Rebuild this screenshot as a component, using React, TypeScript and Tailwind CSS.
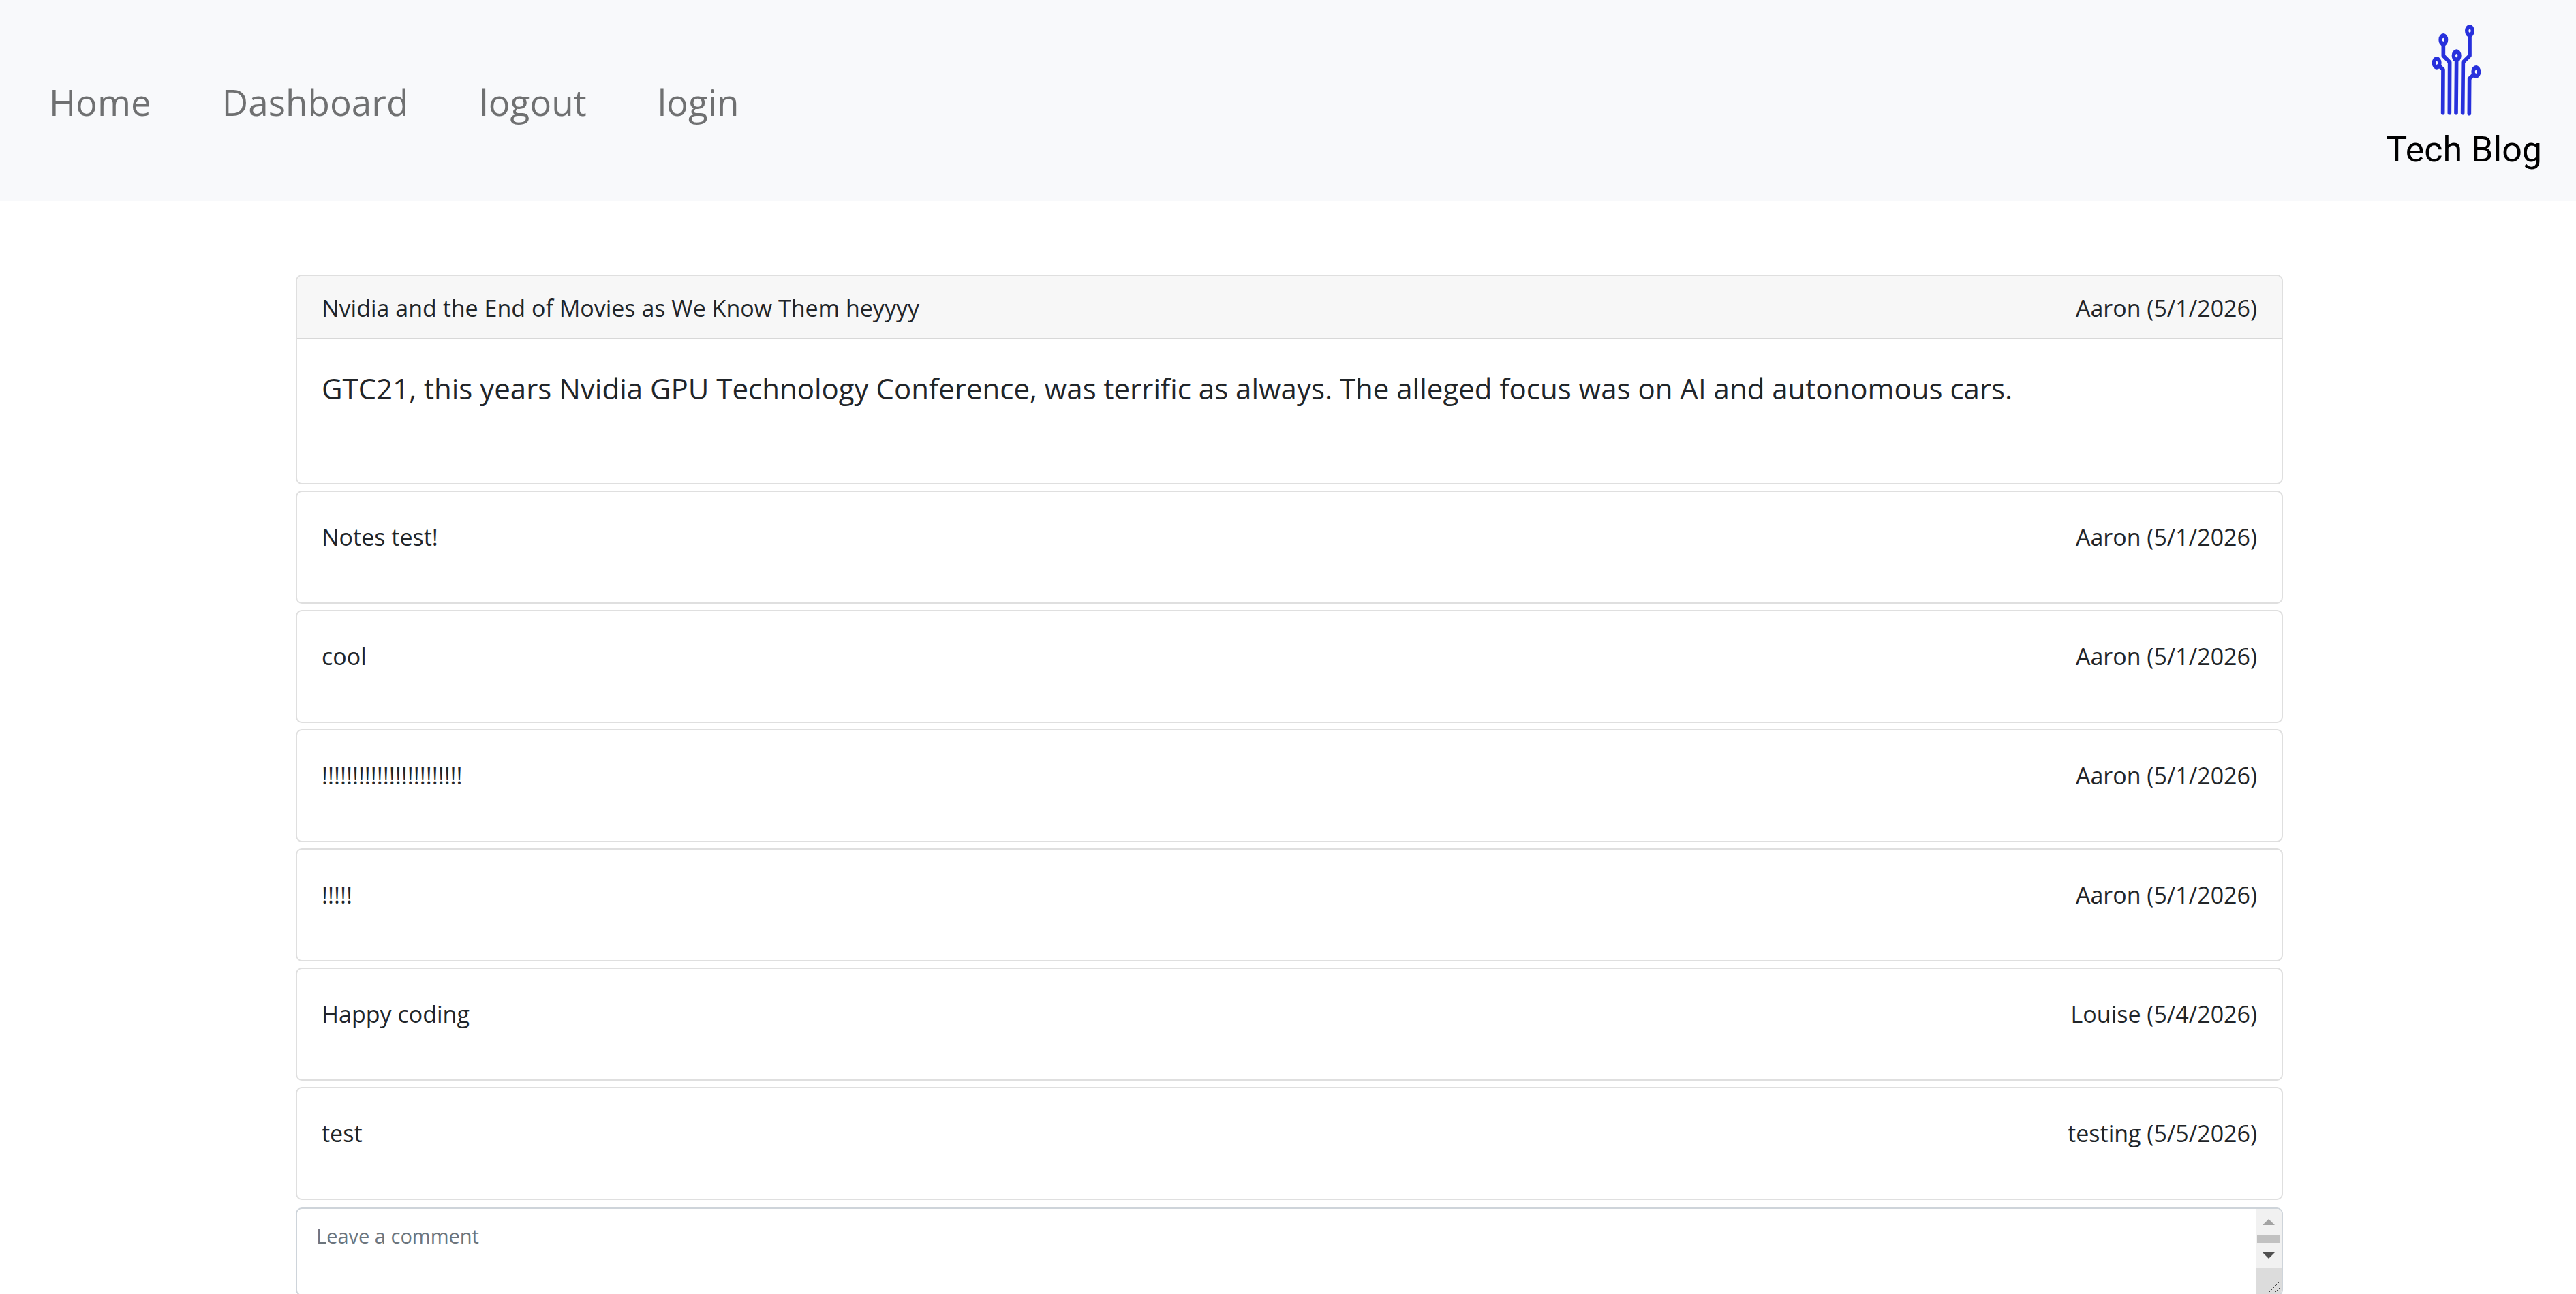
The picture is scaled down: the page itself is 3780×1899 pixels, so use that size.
const links = ["Home", "Dashboard", "logout", "login"];

const comments = [
  { text: "Notes test!", author: "Aaron (5/1/2026)" },
  { text: "cool", author: "Aaron (5/1/2026)" },
  { text: "!!!!!!!!!!!!!!!!!!!!!!!", author: "Aaron (5/1/2026)" },
  { text: "!!!!!", author: "Aaron (5/1/2026)" },
  { text: "Happy coding", author: "Louise (5/4/2026)" },
  { text: "test", author: "testing (5/5/2026)" },
];

const nodes = [
  [414, 275],
  [443, 173],
  [501, 243],
  [559, 134],
  [587, 314],
];

function Logo() {
  return (
    <a href="#" className="flex flex-col items-center pt-[6px] text-black">
      <svg viewBox="199 100 669 414" className="h-[138px] w-[223px]" aria-hidden="true">
        <g fill="none" stroke="#2730dc" strokeWidth="17" strokeLinecap="round" strokeLinejoin="round">
          <path d="M441 495 L442 304 L424 287" />
          <path d="M470 495 L471 272 L443 243 L443 195" />
          <path d="M499 495 L501 265" />
          <path d="M528 495 L530 272 L559 243 L559 155" />
          <path d="M557 498 L558 344 L574 329" />
        </g>
        {nodes.map(([x, y]) => (
          <g key={x}>
            <ellipse cx={x} cy={y} rx="21" ry="28" fill="#2730dc" />
            <ellipse cx={x} cy={y} rx="5" ry="8" fill="#f8f9fb" />
          </g>
        ))}
      </svg>
      <span className="font-[Roboto,sans-serif] text-[52px] leading-[96px] whitespace-nowrap">Tech Blog</span>
    </a>
  );
}

function Comment({ text, author }: { text: string; author: string }) {
  return (
    <li className="flex h-[166px] justify-between rounded-[9px] border-2 border-[#dfdfdf] px-9 pt-[39px]">
      <p className="leading-[54px]">{text}</p>
      <p className="leading-[54px]">{author}</p>
    </li>
  );
}

export default function App() {
  return (
    <div className="h-screen overflow-y-auto bg-white font-['Open_Sans','Noto_Sans',sans-serif] text-[34px] text-[#212529] [scrollbar-width:none]">
      <header className="flex h-[295px] items-center justify-between bg-[#f8f9fb] pr-[50px] pl-[72px]">
        <nav className="flex gap-[104px] pt-1 text-[53px] leading-[84px] text-[#6f7071]">
          {links.map((label) => (
            <a key={label} href="#">
              {label}
            </a>
          ))}
        </nav>
        <Logo />
      </header>

      <main className="pt-[108px] pr-[430px] pl-[434px]">
        <article className="overflow-hidden rounded-[9px] border-2 border-[#dfdfdf]">
          <header className="flex justify-between border-b-2 border-[#d8d8d8] bg-[#f7f7f7] px-9 pt-5 pb-4 leading-[55px]">
            <h1>Nvidia and the End of Movies as We Know Them heyyyy</h1>
            <p>Aaron (5/1/2026)</p>
          </header>
          <p className="h-[211px] px-9 pt-[38px] text-[42px] leading-[68px]">
            GTC21, this years Nvidia GPU Technology Conference, was terrific as always. The alleged focus was on AI and
            autonomous cars.
          </p>
        </article>

        <ul className="mt-[9px] flex flex-col gap-[9px]">
          {comments.map((c, i) => (
            <Comment key={i} text={c.text} author={c.author} />
          ))}
        </ul>

        <form className="mt-[11px] flex h-[130px] overflow-hidden rounded-[9px] border-2 border-[#ced4da]">
          <textarea
            aria-label="Leave a comment"
            placeholder="Leave a comment"
            className="h-full flex-1 resize-none overflow-hidden px-7 pt-4 text-[29px] leading-[48px] outline-none placeholder:text-[#6c757d]"
          />
          <div className="w-[38px] bg-[#f1f1f1]" aria-hidden="true">
            <svg viewBox="0 0 38 126" className="h-[126px] w-[38px]">
              <path d="M10 24 L19 15 L28 24 Z" fill="#a3a3a3" />
              <rect x="2" y="38" width="34" height="12" fill="#c1c1c1" />
              <path d="M10 64 L28 64 L19 73 Z" fill="#505050" />
              <rect x="0" y="87" width="38" height="39" fill="#dcdcdc" />
              <path d="M18 124 L36 106 M27 124 L36 115" stroke="#404040" strokeWidth="1" />
            </svg>
          </div>
        </form>
      </main>
    </div>
  );
}
